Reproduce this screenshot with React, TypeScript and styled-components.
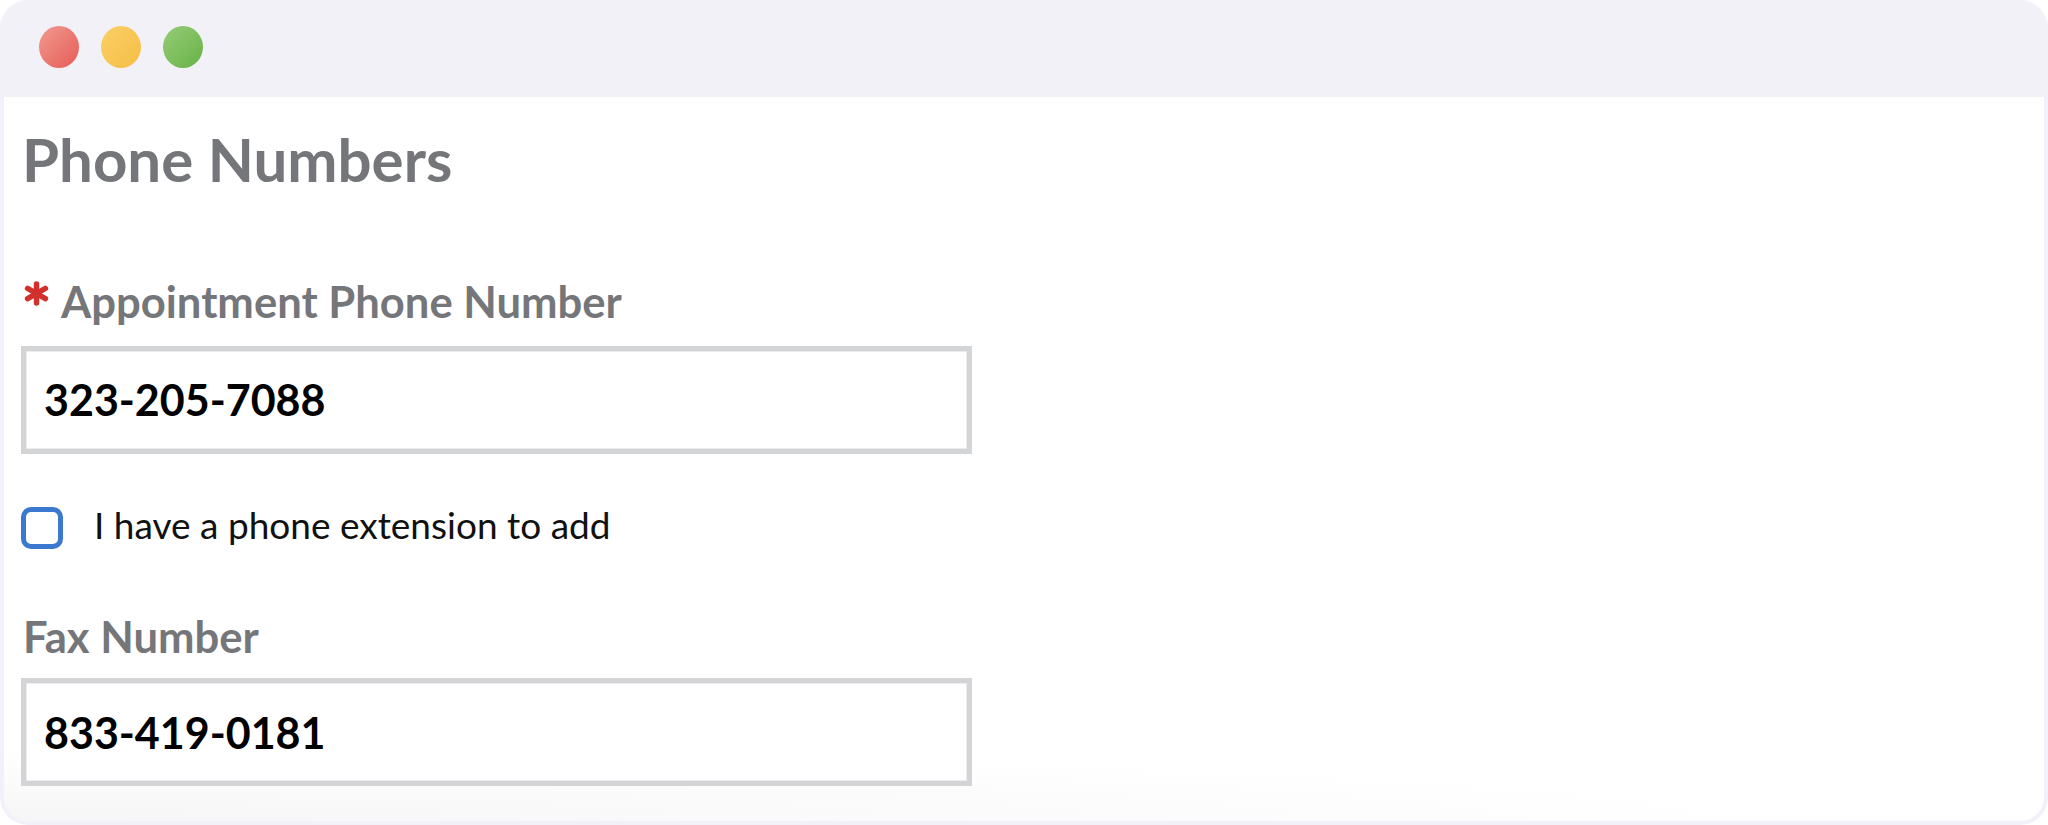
import React from "react";
import styled, { createGlobalStyle } from "styled-components";

const GlobalStyle = createGlobalStyle`
  html, body { margin: 0; padding: 0; background: #ffffff; }
  body { font-family: "Lato", "Noto Sans", sans-serif; }
  * { box-sizing: border-box; }
`;

const Window = styled.div`
  width: 2048px;
  height: 825px;
  display: flex;
  flex-direction: column;
  border: 4px solid #f2f0f8;
  border-top: 0;
  border-radius: 28px;
  overflow: hidden;
  background: #f3f1f8;
`;

const TitleBar = styled.div`
  height: 97px;
  flex: 0 0 auto;
  display: flex;
  align-items: center;
  gap: 22px;
  padding-left: 35px;
  padding-bottom: 4px;
`;

const Light = styled.span<{ $from: string; $to: string }>`
  width: 40px;
  height: 42px;
  border-radius: 50%;
  background: linear-gradient(135deg, ${(p) => p.$from} 0%, ${(p) => p.$to} 100%);
`;

const Content = styled.div`
  flex: 1;
  display: flex;
  flex-direction: column;
  align-items: flex-start;
  padding: 32px 18px 0 17px;
  background:
    radial-gradient(ellipse 1800px 70px at 0% 100%, #f6f6f7 0%, rgba(255, 255, 255, 0) 100%),
    #ffffff;
`;

const Title = styled.h1`
  margin: 0 0 91px 1px;
  font-family: "Lato", sans-serif;
  font-weight: 700;
  font-size: 60px;
  line-height: 1;
  color: #75767a;
`;

const Label = styled.label<{ $mb: number }>`
  display: flex;
  align-items: center;
  gap: 11px;
  margin: 0 0 ${(p) => p.$mb}px 2px;
  font-family: "Lato", sans-serif;
  font-weight: 700;
  font-size: 43.6px;
  line-height: 1;
  color: #75767a;
`;

const Asterisk = styled.svg`
  width: 27px;
  height: 25px;
  align-self: flex-start;
  margin-top: 1px;
`;

const Field = styled.input`
  width: 951px;
  height: 108px;
  margin: 0;
  padding: 0 18px;
  border: 5px solid #d3d4d6;
  border-radius: 0;
  box-shadow: inset 0 0 0 1px #ececee;
  outline: none;
  background: #ffffff;
  font-family: "Lato", sans-serif;
  font-weight: 700;
  font-size: 43px;
  color: #000000;
`;

const CheckRow = styled.div`
  display: flex;
  align-items: center;
  gap: 31px;
  margin: 53px 0 66px 0;
`;

const Box = styled.input`
  appearance: none;
  width: 42px;
  height: 42px;
  margin: 0;
  border: 5px solid #3b79d0;
  border-radius: 10px;
  background: #ffffff;
`;

const CheckText = styled.span`
  font-family: "Lato", sans-serif;
  font-weight: 400;
  font-size: 37px;
  line-height: 1;
  color: #111111;
  margin-top: -7px;
`;

const RequiredMark = () => (
  <Asterisk viewBox="0 0 27 25" aria-hidden="true">
    <g stroke="#d2302c" strokeWidth="5.5" strokeLinecap="round">
      <line x1="13.5" y1="3" x2="13.5" y2="22" />
      <line x1="4.6" y1="7.3" x2="22.4" y2="17.7" />
      <line x1="4.6" y1="17.7" x2="22.4" y2="7.3" />
    </g>
  </Asterisk>
);

export default function App() {
  return (
    <>
      <GlobalStyle />
      <Window>
        <TitleBar>
          <Light $from="#f09a90" $to="#e65c55" />
          <Light $from="#fad066" $to="#f6bd45" />
          <Light $from="#97cc78" $to="#66b244" />
        </TitleBar>
        <Content>
          <Title>Phone Numbers</Title>
          <Label $mb={22}>
            <RequiredMark />
            Appointment Phone Number
          </Label>
          <Field readOnly defaultValue="323-205-7088" />
          <CheckRow>
            <Box type="checkbox" />
            <CheckText>I have a phone extension to add</CheckText>
          </CheckRow>
          <Label $mb={20}>Fax Number</Label>
          <Field readOnly defaultValue="833-419-0181" />
        </Content>
      </Window>
    </>
  );
}
